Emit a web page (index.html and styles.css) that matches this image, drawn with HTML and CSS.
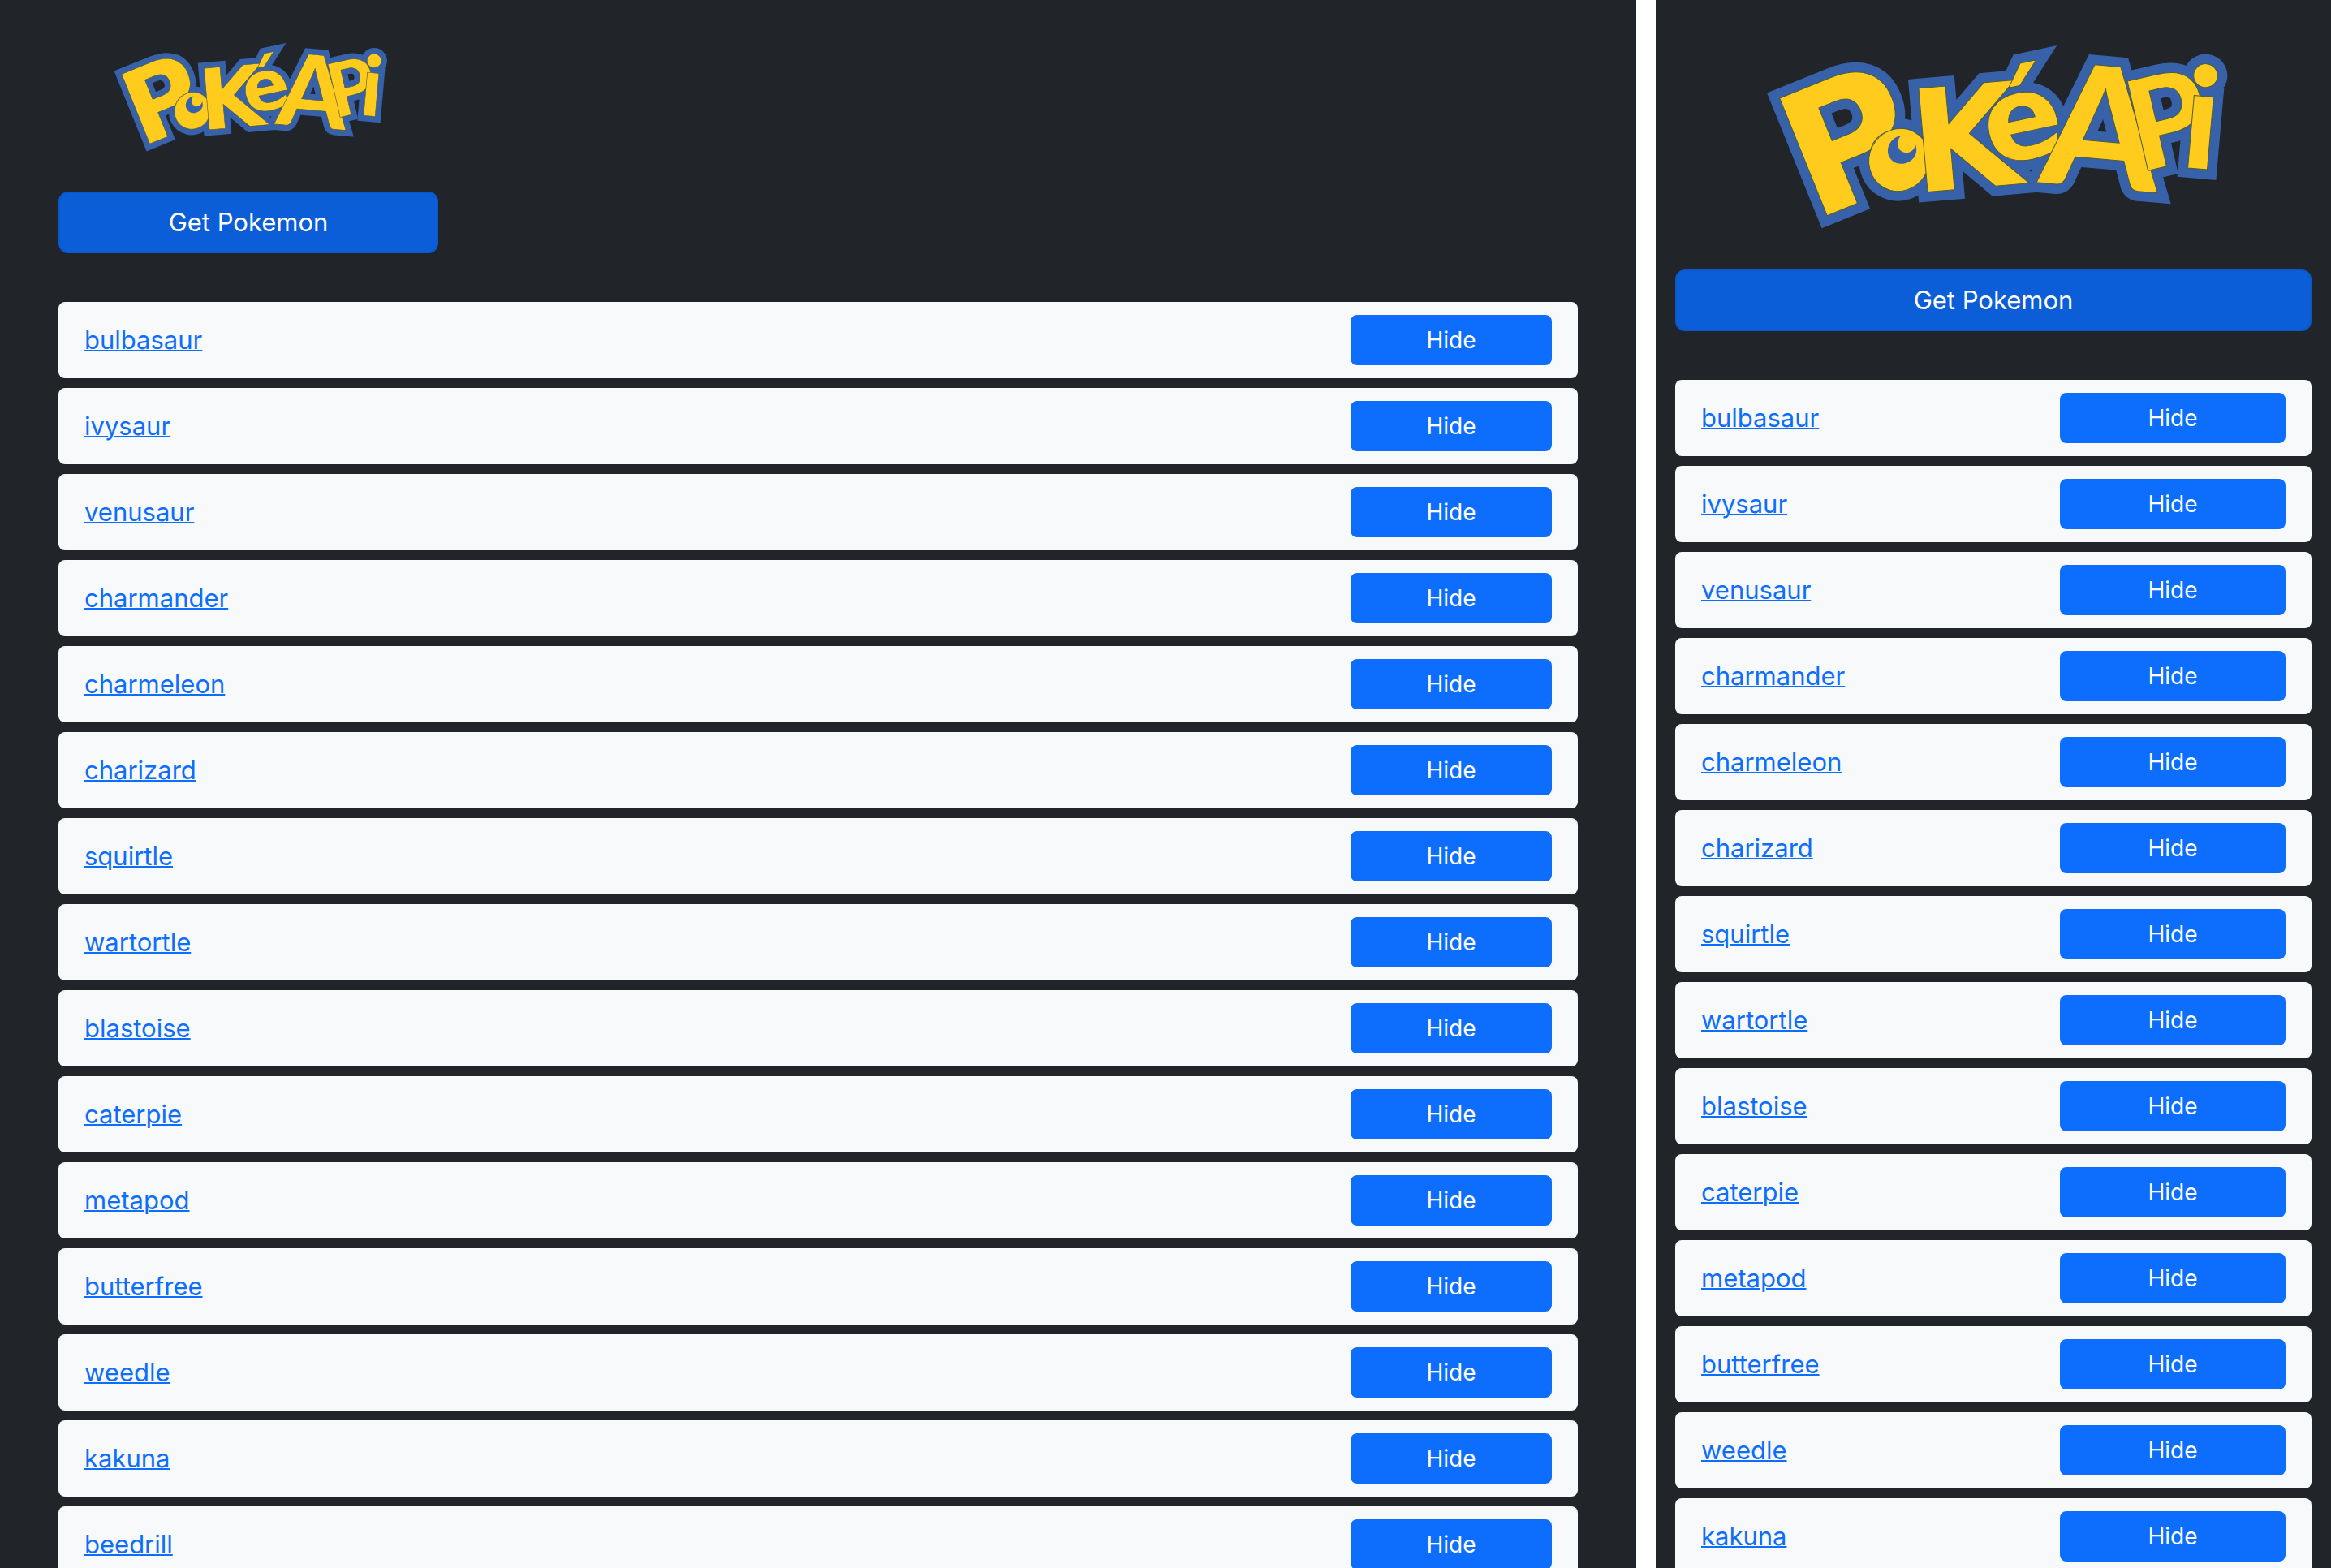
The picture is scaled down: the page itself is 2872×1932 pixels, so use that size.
FILE: index.html
```
<!DOCTYPE html>
<html lang="en">
<head>
    <meta charset="UTF-8">
    <meta name="viewport" content="width=device-width, initial-scale=1.0">
    <title>PokéApi</title>
    <link rel="stylesheet" href="styles.css">
</head>
<body>

    <!-- Logo lettering, shared by both panes -->
    <svg class="logo-defs" aria-hidden="true">
        <defs>
            <g id="letters">
                <text class="wide-letter" font-size="214" transform="translate(169 225) rotate(-22)">P</text>
                <text font-size="134" transform="translate(238 185) rotate(-4)">o</text>
                <ellipse cx="276" cy="149" rx="37" ry="39" transform="rotate(28 276 149)"/>
                <text class="wide-letter" font-size="176" transform="translate(295 190) rotate(-5)">K</text>
                <text class="wide-letter" font-size="146" transform="translate(389 157) rotate(-12)">é</text>
                <text font-size="208" transform="translate(447 177) rotate(5)">A</text>
                <text font-size="156" transform="translate(571 165) rotate(-13)">P</text>
                <text font-size="174" transform="translate(621 158) rotate(5)">i</text>
            </g>
        </defs>
    </svg>

    <div class="screens">
        <main class="pane pane-wide">
            <svg class="logo" viewBox="0 0 784 236" role="img" aria-label="PokéApi">
                <use href="#letters" class="logo-outline"/>
                <use href="#letters" class="logo-fill"/>
                <path class="logo-eye" d="M278 119C268 121 261 130 262 140C264 151 274 156 284 153C294 150 300 141 296 130C295 137 289 141 283 140C274 138 271 128 278 119Z"/>
            </svg>
            <button class="get-button" type="button">Get Pokemon</button>
            <ul class="pokemon-list">
                <li class="pokemon"><a href="#bulbasaur">bulbasaur</a><button class="hide-button" type="button">Hide</button></li>
                <li class="pokemon"><a href="#ivysaur">ivysaur</a><button class="hide-button" type="button">Hide</button></li>
                <li class="pokemon"><a href="#venusaur">venusaur</a><button class="hide-button" type="button">Hide</button></li>
                <li class="pokemon"><a href="#charmander">charmander</a><button class="hide-button" type="button">Hide</button></li>
                <li class="pokemon"><a href="#charmeleon">charmeleon</a><button class="hide-button" type="button">Hide</button></li>
                <li class="pokemon"><a href="#charizard">charizard</a><button class="hide-button" type="button">Hide</button></li>
                <li class="pokemon"><a href="#squirtle">squirtle</a><button class="hide-button" type="button">Hide</button></li>
                <li class="pokemon"><a href="#wartortle">wartortle</a><button class="hide-button" type="button">Hide</button></li>
                <li class="pokemon"><a href="#blastoise">blastoise</a><button class="hide-button" type="button">Hide</button></li>
                <li class="pokemon"><a href="#caterpie">caterpie</a><button class="hide-button" type="button">Hide</button></li>
                <li class="pokemon"><a href="#metapod">metapod</a><button class="hide-button" type="button">Hide</button></li>
                <li class="pokemon"><a href="#butterfree">butterfree</a><button class="hide-button" type="button">Hide</button></li>
                <li class="pokemon"><a href="#weedle">weedle</a><button class="hide-button" type="button">Hide</button></li>
                <li class="pokemon"><a href="#kakuna">kakuna</a><button class="hide-button" type="button">Hide</button></li>
                <li class="pokemon"><a href="#beedrill">beedrill</a><button class="hide-button" type="button">Hide</button></li>
            </ul>
        </main>

        <!-- Narrow version -->
        <section class="pane pane-narrow">
            <svg class="logo" viewBox="0 0 784 236" role="img" aria-label="PokéApi">
                <use href="#letters" class="logo-outline"/>
                <use href="#letters" class="logo-fill"/>
                <path class="logo-eye" d="M278 119C268 121 261 130 262 140C264 151 274 156 284 153C294 150 300 141 296 130C295 137 289 141 283 140C274 138 271 128 278 119Z"/>
            </svg>
            <button class="get-button" type="button">Get Pokemon</button>
            <ul class="pokemon-list">
                <li class="pokemon"><a href="#bulbasaur">bulbasaur</a><button class="hide-button" type="button">Hide</button></li>
                <li class="pokemon"><a href="#ivysaur">ivysaur</a><button class="hide-button" type="button">Hide</button></li>
                <li class="pokemon"><a href="#venusaur">venusaur</a><button class="hide-button" type="button">Hide</button></li>
                <li class="pokemon"><a href="#charmander">charmander</a><button class="hide-button" type="button">Hide</button></li>
                <li class="pokemon"><a href="#charmeleon">charmeleon</a><button class="hide-button" type="button">Hide</button></li>
                <li class="pokemon"><a href="#charizard">charizard</a><button class="hide-button" type="button">Hide</button></li>
                <li class="pokemon"><a href="#squirtle">squirtle</a><button class="hide-button" type="button">Hide</button></li>
                <li class="pokemon"><a href="#wartortle">wartortle</a><button class="hide-button" type="button">Hide</button></li>
                <li class="pokemon"><a href="#blastoise">blastoise</a><button class="hide-button" type="button">Hide</button></li>
                <li class="pokemon"><a href="#caterpie">caterpie</a><button class="hide-button" type="button">Hide</button></li>
                <li class="pokemon"><a href="#metapod">metapod</a><button class="hide-button" type="button">Hide</button></li>
                <li class="pokemon"><a href="#butterfree">butterfree</a><button class="hide-button" type="button">Hide</button></li>
                <li class="pokemon"><a href="#weedle">weedle</a><button class="hide-button" type="button">Hide</button></li>
                <li class="pokemon"><a href="#kakuna">kakuna</a><button class="hide-button" type="button">Hide</button></li>
            </ul>
        </section>
    </div>

</body>
</html>
```
FILE: styles.css
```
* {
    box-sizing: border-box;
}
body {
    margin: 0;
    background-color: #fff;
    font-family: Inter, "Liberation Sans", sans-serif;
    font-size: 31px;
    line-height: 48px;
}

/* Two panes side by side */
.screens {
    display: grid;
    grid-template-columns: 63fr 26fr;
    gap: 24px;
    height: 100vh;
    overflow: hidden;
}
.pane {
    background-color: #212529;
    overflow: hidden;
}
.pane-wide {
    padding: 48px 72px 0;
}
.pane-narrow {
    padding: 48px 24px 0;
}

/* Logo */
.logo-defs {
    position: absolute;
    width: 0;
    height: 0;
}
.logo {
    display: block;
    width: 100%;
    height: 236px;
    margin-bottom: 48px;
    font-family: Lato, sans-serif;
    font-weight: 900;
}
.wide-letter {
    font-family: "DejaVu Sans", sans-serif;
    font-weight: bold;
}
.logo-outline {
    fill: #3761a8;
    stroke: #3761a8;
    stroke-width: 24px;
}
.logo-fill {
    fill: #ffcb1c;
    stroke: #4b5c3c;
    stroke-width: 1px;
}
.logo-eye {
    fill: #3761a8;
}

/* Buttons */
button {
    border: 2px solid #0d6efd;
    background-color: #0d6efd;
    color: #fff;
    font-family: inherit;
    text-align: center;
    cursor: pointer;
}
.get-button {
    display: block;
    width: 100%;
    padding: 12px 24px;
    border-color: #0a58ca;
    border-radius: 12px;
    background-color: #0b5ed7;
    font-size: 31px;
    line-height: 48px;
}
.hide-button {
    width: 248px;
    padding: 8px 16px;
    border-radius: 8px;
    font-size: 28px;
    line-height: 42px;
}
.pane-wide .logo,
.pane-wide .get-button {
    width: 25%;
}
.pane-wide .logo {
    height: 140px;
}
.pane-narrow .hide-button {
    width: 278px;
}

/* Pokemon list */
.pokemon-list {
    display: flex;
    flex-direction: column;
    gap: 12px;
    margin: 60px 0 0;
    padding: 0;
    list-style: none;
}
.pokemon {
    display: flex;
    align-items: center;
    justify-content: space-between;
    padding: 16px 32px;
    border-radius: 8px;
    background-color: #f8f9fa;
}
.pokemon a {
    color: #0d6efd;
    text-decoration: underline;
    text-decoration-thickness: 2px;
}
```
